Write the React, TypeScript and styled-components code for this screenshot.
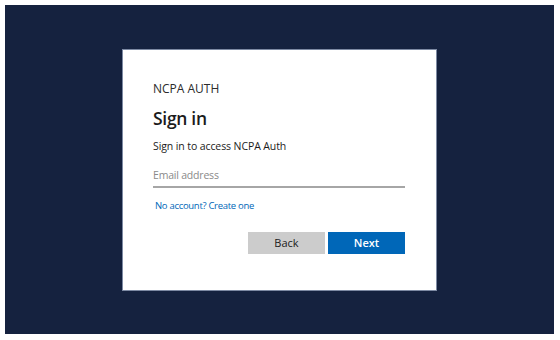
import React from "react";
import styled, { createGlobalStyle } from "styled-components";

const Global = createGlobalStyle`
  html, body { margin: 0; padding: 0; background: #ffffff; }
  body { font-family: "Open Sans", "Noto Sans", Arial, sans-serif; }
  * { box-sizing: border-box; }
`;

const Backdrop = styled.div`
  margin: 5px;
  width: 549px;
  height: 329px;
  background: #15223f;
  display: flex;
  align-items: center;
  justify-content: center;
`;

const Card = styled.div`
  width: 315px;
  height: 242px;
  background: #ffffff;
  border: 1px solid #7d8aa3;
  padding: 31px 31px 0 30px;
  display: flex;
  flex-direction: column;
`;

const Brand = styled.div`
  font-size: 12px;
  line-height: 16px;
  color: #2b2b2b;
`;

const Title = styled.h1`
  margin: 9px 0 0;
  font-size: 17.5px;
  line-height: 24px;
  font-weight: 600;
  letter-spacing: -0.3px;
  color: #1b1b1b;
`;

const Subtitle = styled.p`
  margin: 8px 0 0;
  font-size: 10.5px;
  line-height: 16px;
  letter-spacing: -0.1px;
  color: #1b1b1b;
`;

const EmailInput = styled.input`
  margin-top: 11px;
  width: 100%;
  height: 23px;
  border: none;
  border-bottom: 2px solid #a6a6a6;
  padding: 0;
  font-family: inherit;
  font-size: 10.5px;
  letter-spacing: -0.2px;
  color: #1b1b1b;
  background: transparent;
  outline: none;
  &::placeholder { color: #8a8a8a; }
`;

const Link = styled.a`
  margin: 11px 0 0 2px;
  font-size: 9.5px;
  line-height: 14px;
  letter-spacing: -0.3px;
  color: #0067b8;
  text-decoration: none;
`;

const Actions = styled.div`
  margin-top: 19px;
  display: flex;
  justify-content: flex-end;
  gap: 3px;
`;

const Button = styled.button<{ $primary?: boolean }>`
  width: 77px;
  height: 22px;
  border: none;
  padding: 0;
  font-family: inherit;
  font-size: 11px;
  font-weight: ${(p) => (p.$primary ? 600 : 400)};
  color: ${(p) => (p.$primary ? "#ffffff" : "#1b1b1b")};
  background: ${(p) => (p.$primary ? "#0067b8" : "#cccccc")};
  cursor: pointer;
`;

export default function App() {
  return (
    <>
      <Global />
      <Backdrop>
        <Card>
          <Brand>NCPA AUTH</Brand>
          <Title>Sign in</Title>
          <Subtitle>Sign in to access NCPA Auth</Subtitle>
          <EmailInput type="email" placeholder="Email address" />
          <Link href="#">No account? Create one</Link>
          <Actions>
            <Button>Back</Button>
            <Button $primary>Next</Button>
          </Actions>
        </Card>
      </Backdrop>
    </>
  );
}
